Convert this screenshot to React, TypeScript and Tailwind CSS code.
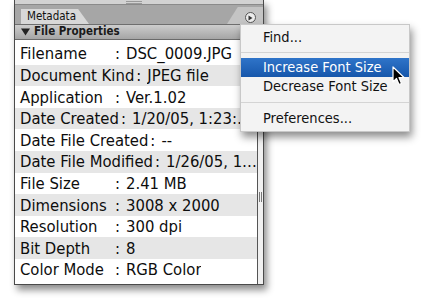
import React from 'react';

const rows = [
  { label: 'Filename', value: 'DSC_0009.JPG' },
  { label: 'Document Kind', value: 'JPEG file' },
  { label: 'Application', value: 'Ver.1.02' },
  { label: 'Date Created', value: '1/20/05, 1:23:45 PM' },
  { label: 'Date File Created', value: '--' },
  { label: 'Date File Modified', value: '1/26/05, 10:12:04 AM' },
  { label: 'File Size', value: '2.41 MB' },
  { label: 'Dimensions', value: '3008 x 2000' },
  { label: 'Resolution', value: '300 dpi' },
  { label: 'Bit Depth', value: '8' },
  { label: 'Color Mode', value: 'RGB Color' },
];

const font = 'font-["DejaVu_Sans_Condensed","DejaVu_Sans",sans-serif]';

export default function App() {
  return (
    <div className={`relative w-[421px] h-[304px] bg-white overflow-hidden ${font}`}>
      {/* Metadata palette */}
      <div className="ml-[14px] w-[250px] border-l border-r border-b border-[#4a4a4a] shadow-[3px_5px_7px_rgba(0,0,0,0.45)] bg-white">
        {/* top strip */}
        <div className="h-[5px] bg-[#d2d2d2] border-b border-[#8a8a8a] flex justify-center items-center">
          <div className="w-[16px] h-[3px] border-t border-b border-[#9a9a9a] ml-[-10px]" />
        </div>
        {/* tab bar */}
        <div className="relative h-[20px] bg-[#a6a6a6] border-b border-[#6e6e6e]">
          <div className="absolute left-[6px] top-[4px] h-[15px] w-[68px] bg-[#d8d8d8] [clip-path:polygon(0_0,84%_0,100%_100%,0_100%)] flex items-center pl-[6px] text-[11.5px] text-[#111] leading-none">
            Metadata
          </div>
          <div className="absolute right-0 top-[2px] h-[17px] w-[36px] bg-[#c4c4c4] [clip-path:polygon(30%_0,100%_0,100%_100%,0_100%)]" />
          <div className="absolute right-[7px] top-[7px] w-[11px] h-[11px] rounded-full border border-[#555] bg-[#ececec] flex items-center justify-center">
            <svg width="5" height="6" viewBox="0 0 5 6">
              <path d="M0.5 0.5 L4.5 3 L0.5 5.5 Z" fill="#333" />
            </svg>
          </div>
        </div>
        {/* section header */}
        <div className="h-[15px] bg-gradient-to-b from-[#cdcdcd] to-[#a5a5a5] border-b border-[#6a6a6a] flex items-center pl-[6px] gap-[4px]">
          <svg width="9" height="8" viewBox="0 0 9 8">
            <path d="M0 0.5 L9 0.5 L4.5 7.5 Z" fill="#222" />
          </svg>
          <span className="text-[11.5px] font-bold text-[#1a1a1a] leading-none">File Properties</span>
        </div>
        {/* rows + right rail */}
        <div className="flex">
          <div className="flex-1 min-w-0 pt-[3px]">
            {rows.map((r, i) => (
              <div
                key={r.label}
                className={`h-[21.6px] flex items-center pt-[2px] pl-[5px] text-[16.5px] text-[#0d0d0d] whitespace-nowrap overflow-hidden ${i % 2 === 1 ? 'bg-[#e6e6e6]' : 'bg-white'}`}
              >
                <span className="inline-block min-w-[93px] shrink-0">{r.label}</span>
                <span className="ml-[2px] shrink-0">:</span>
                <span className="ml-[6px] min-w-0 overflow-hidden text-ellipsis">{r.value}</span>
              </div>
            ))}
            <div className="h-[3px]" />
          </div>
          <div className="w-[6px] border-l border-[#555] bg-[#f0f0f0] flex flex-col items-center">
            <div className="h-[152px]" />
            <div className="w-[3px] h-[10px] border-l border-r border-[#777]" />
          </div>
        </div>
      </div>

      {/* fly-out menu */}
      <div className="absolute left-[240px] top-[24px] w-[170px] bg-[#f3f3f3] shadow-[2px_5px_8px_rgba(0,0,0,0.45)] border border-[#c8c8c8] py-[3px] text-[14.5px] text-[#111]">
        <div className="h-[19px] flex items-center pl-[22px]">Find...</div>
        <div className="h-[11px] flex items-center"><div className="w-full h-px bg-[#d4d4d4]" /></div>
        <div className="h-[19px] flex items-center pl-[22px] bg-gradient-to-b from-[#2f74c9] to-[#1657ab] text-white">Increase Font Size</div>
        <div className="h-[19px] flex items-center pl-[22px]">Decrease Font Size</div>
        <div className="h-[13px] flex items-center"><div className="w-full h-px bg-[#d4d4d4]" /></div>
        <div className="h-[19px] flex items-center pl-[22px]">Preferences...</div>
      </div>

      {/* mouse pointer */}
      <svg className="absolute left-[392px] top-[66px]" width="13" height="20" viewBox="0 0 13 20">
        <path d="M1 1 L1 16 L4.5 12.5 L7 18.5 L9.5 17.5 L7 11.5 L12 11.5 Z" fill="#000" stroke="#fff" strokeWidth="1.2" strokeLinejoin="round" />
      </svg>
    </div>
  );
}
